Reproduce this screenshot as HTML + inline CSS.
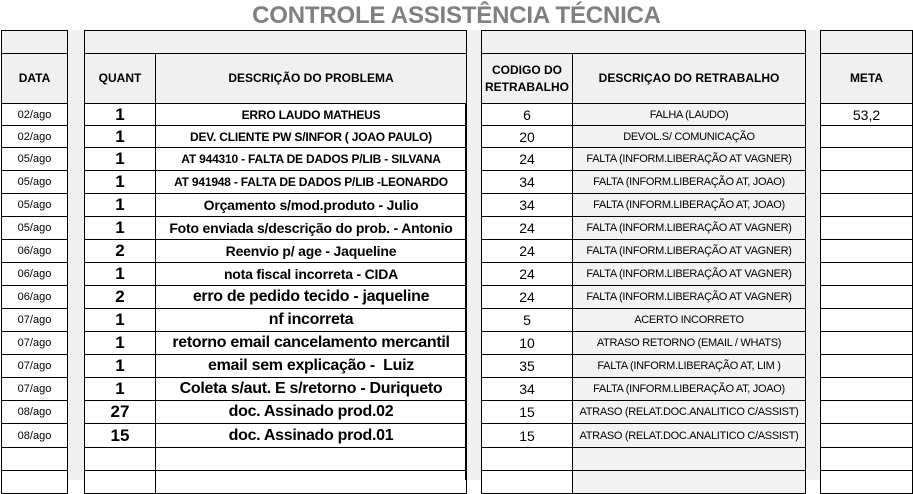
<!DOCTYPE html>
<html><head><meta charset="utf-8"><style>
body{margin:0;width:913px;height:474px;overflow:hidden;background:#fff;font-family:"Liberation Sans",Arial,sans-serif;position:relative}
.t{position:absolute;top:2px;left:0;width:913px;text-align:center;font-weight:bold;font-size:24px;color:#808080;letter-spacing:-0.2px}
table{position:absolute;top:30px;border-collapse:collapse;table-layout:fixed}
td{border:1px solid #000;padding:0;text-align:center;white-space:nowrap;overflow:hidden;color:#000}
tr.g td{background:#f0f0f0;height:22px}
tr.h td{background:#f0f0f0;height:49px;font-weight:bold;font-size:12px;line-height:17px}
.gap{position:absolute;top:30px;height:450px;background:#f0f0f0;border-left:1px solid #000;border-right:1px solid #000}
.d{font-size:11px}
.q{font-weight:bold;font-size:17px}
.p1{font-weight:bold;font-size:12px;letter-spacing:-0.2px}
.p2{font-weight:bold;font-size:14px;letter-spacing:-0.2px}
.p3{font-weight:bold;font-size:16px;letter-spacing:-0.3px}
.c{font-size:14px}
.r{font-size:11px;background:#f2f2f2;letter-spacing:-0.3px}
</style></head><body>
<div class="t">CONTROLE ASSISTÊNCIA TÉCNICA</div>
<div class="gap" style="left:67px;width:16px"></div>
<div class="gap" style="left:465px;width:15px"></div>
<div class="gap" style="left:804px;width:15px"></div>

<table style="left:1px;width:67px">
<tr class="g"><td></td></tr><tr class="h"><td>DATA</td></tr>
<tr style="height:22px"><td class="d">02/ago</td></tr>
<tr style="height:22px"><td class="d">02/ago</td></tr>
<tr style="height:23px"><td class="d">05/ago</td></tr>
<tr style="height:23px"><td class="d">05/ago</td></tr>
<tr style="height:23px"><td class="d">05/ago</td></tr>
<tr style="height:23px"><td class="d">05/ago</td></tr>
<tr style="height:23px"><td class="d">06/ago</td></tr>
<tr style="height:23px"><td class="d">06/ago</td></tr>
<tr style="height:23px"><td class="d">06/ago</td></tr>
<tr style="height:23px"><td class="d">07/ago</td></tr>
<tr style="height:23px"><td class="d">07/ago</td></tr>
<tr style="height:23px"><td class="d">07/ago</td></tr>
<tr style="height:23px"><td class="d">07/ago</td></tr>
<tr style="height:23px"><td class="d">08/ago</td></tr>
<tr style="height:24px"><td class="d">08/ago</td></tr>
<tr style="height:23px"><td></td></tr>
<tr style="height:23px"><td></td></tr>
</table>

<table style="left:84px;width:382px">
<col style="width:71px"><col style="width:311px">
<tr class="g"><td colspan="2"></td></tr><tr class="h"><td>QUANT</td><td>DESCRIÇÃO DO PROBLEMA</td></tr>
<tr style="height:22px"><td class="q">1</td><td class="p1">ERRO LAUDO MATHEUS</td></tr>
<tr style="height:22px"><td class="q">1</td><td class="p1">DEV. CLIENTE PW S/INFOR ( JOAO PAULO)</td></tr>
<tr style="height:23px"><td class="q">1</td><td class="p1">AT 944310 - FALTA DE DADOS P/LIB - SILVANA</td></tr>
<tr style="height:23px"><td class="q">1</td><td class="p1">AT 941948 - FALTA DE DADOS P/LIB -LEONARDO</td></tr>
<tr style="height:23px"><td class="q">1</td><td class="p2">Orçamento s/mod.produto - Julio</td></tr>
<tr style="height:23px"><td class="q">1</td><td class="p2">Foto enviada s/descrição do prob. - Antonio</td></tr>
<tr style="height:23px"><td class="q">2</td><td class="p2">Reenvio p/ age - Jaqueline</td></tr>
<tr style="height:23px"><td class="q">1</td><td class="p2">nota fiscal incorreta - CIDA</td></tr>
<tr style="height:23px"><td class="q">2</td><td class="p3">erro de pedido tecido - jaqueline</td></tr>
<tr style="height:23px"><td class="q">1</td><td class="p3">nf incorreta</td></tr>
<tr style="height:23px"><td class="q">1</td><td class="p3">retorno email cancelamento mercantil</td></tr>
<tr style="height:23px"><td class="q">1</td><td class="p3">email sem explicação -&nbsp; Luiz</td></tr>
<tr style="height:23px"><td class="q">1</td><td class="p3">Coleta s/aut. E s/retorno - Duriqueto</td></tr>
<tr style="height:23px"><td class="q">27</td><td class="p3">doc. Assinado prod.02</td></tr>
<tr style="height:24px"><td class="q">15</td><td class="p3">doc. Assinado prod.01</td></tr>
<tr style="height:23px"><td></td><td></td></tr>
<tr style="height:23px"><td></td><td></td></tr>
</table>

<table style="left:481px;width:324px">
<col style="width:91px"><col style="width:233px">
<tr class="g"><td colspan="2"></td></tr><tr class="h"><td>CODIGO DO<br>RETRABALHO</td><td>DESCRIÇAO DO RETRABALHO</td></tr>
<tr style="height:22px"><td class="c">6</td><td class="r">FALHA (LAUDO)</td></tr>
<tr style="height:22px"><td class="c">20</td><td class="r">DEVOL.S/ COMUNICAÇÃO</td></tr>
<tr style="height:23px"><td class="c">24</td><td class="r">FALTA (INFORM.LIBERAÇÃO AT VAGNER)</td></tr>
<tr style="height:23px"><td class="c">34</td><td class="r">FALTA (INFORM.LIBERAÇÃO AT, JOAO)</td></tr>
<tr style="height:23px"><td class="c">34</td><td class="r">FALTA (INFORM.LIBERAÇÃO AT, JOAO)</td></tr>
<tr style="height:23px"><td class="c">24</td><td class="r">FALTA (INFORM.LIBERAÇÃO AT VAGNER)</td></tr>
<tr style="height:23px"><td class="c">24</td><td class="r">FALTA (INFORM.LIBERAÇÃO AT VAGNER)</td></tr>
<tr style="height:23px"><td class="c">24</td><td class="r">FALTA (INFORM.LIBERAÇÃO AT VAGNER)</td></tr>
<tr style="height:23px"><td class="c">24</td><td class="r">FALTA (INFORM.LIBERAÇÃO AT VAGNER)</td></tr>
<tr style="height:23px"><td class="c">5</td><td class="r">ACERTO INCORRETO</td></tr>
<tr style="height:23px"><td class="c">10</td><td class="r">ATRASO RETORNO (EMAIL / WHATS)</td></tr>
<tr style="height:23px"><td class="c">35</td><td class="r">FALTA (INFORM.LIBERAÇÃO AT, LIM )</td></tr>
<tr style="height:23px"><td class="c">34</td><td class="r">FALTA (INFORM.LIBERAÇÃO AT, JOAO)</td></tr>
<tr style="height:23px"><td class="c">15</td><td class="r">ATRASO (RELAT.DOC.ANALITICO C/ASSIST)</td></tr>
<tr style="height:24px"><td class="c">15</td><td class="r">ATRASO (RELAT.DOC.ANALITICO C/ASSIST)</td></tr>
<tr style="height:23px"><td></td><td class="r"></td></tr>
<tr style="height:23px"><td></td><td class="r"></td></tr>
</table>

<table style="left:820px;width:93px">
<tr class="g"><td></td></tr><tr class="h"><td>META</td></tr>
<tr style="height:22px"><td class="c">53,2</td></tr>
<tr style="height:22px"><td></td></tr>
<tr style="height:23px"><td></td></tr><tr style="height:23px"><td></td></tr>
<tr style="height:23px"><td></td></tr><tr style="height:23px"><td></td></tr>
<tr style="height:23px"><td></td></tr><tr style="height:23px"><td></td></tr>
<tr style="height:23px"><td></td></tr><tr style="height:23px"><td></td></tr>
<tr style="height:23px"><td></td></tr><tr style="height:23px"><td></td></tr>
<tr style="height:23px"><td></td></tr><tr style="height:23px"><td></td></tr>
<tr style="height:24px"><td></td></tr><tr style="height:23px"><td></td></tr>
<tr style="height:23px"><td></td></tr>
</table>
</body></html>
